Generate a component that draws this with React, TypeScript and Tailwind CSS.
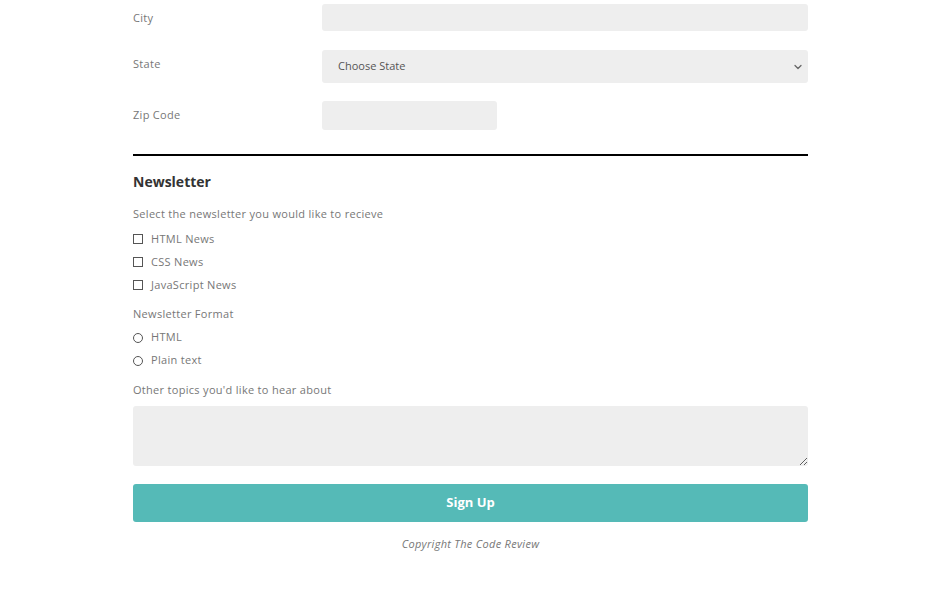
import { ChevronDown } from 'lucide-react'

const font = { fontFamily: '"Open Sans", "Noto Sans", sans-serif' }

function FieldRow({ label, children, className }: { label: string; children: React.ReactNode; className?: string }) {
  return (
    <div className={`flex items-start ${className ?? ''}`}>
      <label className="w-[189px] shrink-0 pt-[6px] leading-[15px] text-[11px] tracking-[0.3px] text-[#777]">{label}</label>
      {children}
    </div>
  )
}

function Check({ label, round }: { label: string; round?: boolean }) {
  return (
    <label className="flex items-center h-[23px] text-[11px] tracking-[0.3px] text-[#777]">
      <span
        className={`w-[10px] h-[10px] border border-[#555] bg-white mr-[8px] ${round ? 'rounded-full' : ''}`}
      />
      {label}
    </label>
  )
}

export default function App() {
  return (
    <div className="min-h-[611px] bg-white" style={font}>
      <form className="ml-[133px] w-[675px] pt-[4px]">
        {/* Address rows */}
        <FieldRow label="City">
          <input className="flex-1 h-[27px] rounded-[3px] bg-[#eee] outline-none" />
        </FieldRow>
        <FieldRow label="State" className="mt-[19px]">
          <div className="relative flex-1 h-[33px] rounded-[3px] bg-[#eee] flex items-center pl-[16px] text-[11px] text-[#555]">
            Choose State
            <ChevronDown size={12} strokeWidth={2.5} className="absolute right-[4px] top-[11px] text-[#666]" />
          </div>
        </FieldRow>
        <FieldRow label="Zip Code" className="mt-[18px]">
          <input className="w-[175px] h-[29px] rounded-[3px] bg-[#eee] outline-none" />
        </FieldRow>

        <div className="mt-[24px] h-[2px] bg-black" />

        {/* Newsletter */}
        <h2 className="mt-[16px] text-[14px] font-bold text-[#333] leading-[20px]">Newsletter</h2>
        <p className="mt-[14px] text-[11px] tracking-[0.3px] text-[#777]">Select the newsletter you would like to recieve</p>
        <div className="mt-[5px]">
          <Check label="HTML News" />
          <Check label="CSS News" />
          <Check label="JavaScript News" />
        </div>
        <p className="mt-[9px] text-[11px] tracking-[0.3px] text-[#777]">Newsletter Format</p>
        <div className="mt-[4px]">
          <Check label="HTML" round />
          <Check label="Plain text" round />
        </div>
        <p className="mt-[10px] text-[11px] tracking-[0.3px] text-[#777]">Other topics you'd like to hear about</p>
        <textarea className="mt-[7px] block w-full h-[60px] rounded-[3px] bg-[#eee] outline-none" />

        <button
          type="button"
          className="mt-[18px] w-full h-[38px] rounded-[3px] bg-[#55bab7] text-white text-[13px] font-bold"
        >
          Sign Up
        </button>
        <p className="mt-[14px] text-center text-[11px] italic tracking-[0.3px] text-[#777]">Copyright The Code Review</p>
      </form>
    </div>
  )
}
